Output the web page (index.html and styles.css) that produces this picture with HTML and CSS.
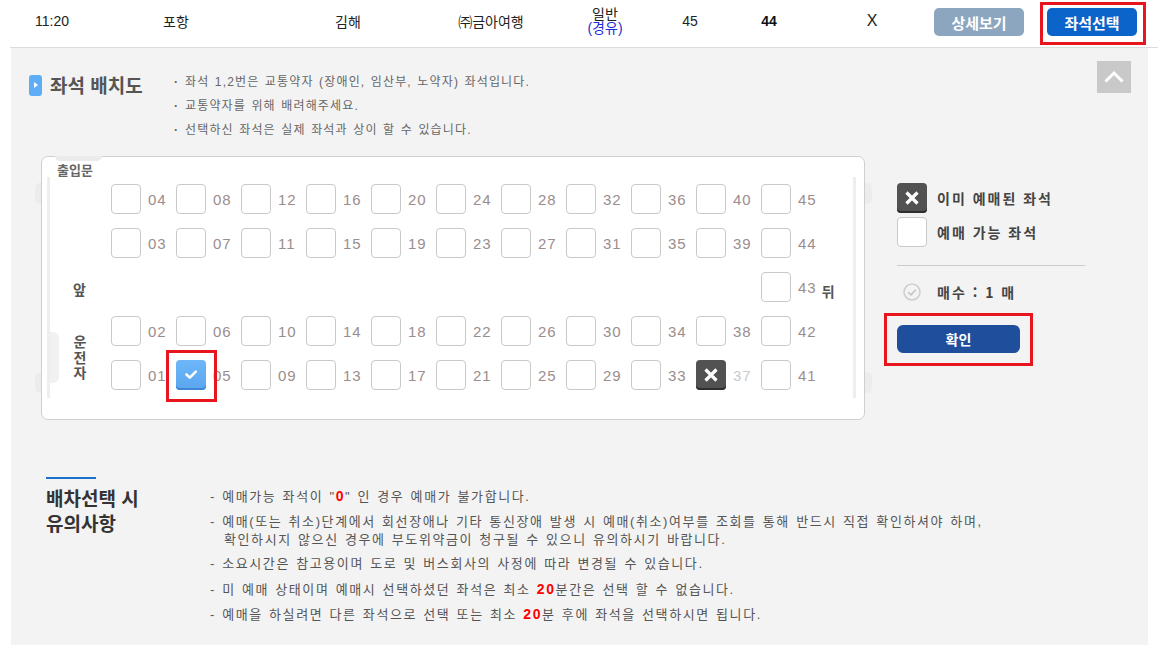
FILE: index.html
```html
<!DOCTYPE html>
<html lang="ko">
<head>
<meta charset="utf-8">
<title>좌석 배치도</title>
<link rel="stylesheet" href="styles.css">
</head>
<body>
<div class="topbar">
  <div class="cell c-time">11:20</div>
  <div class="cell c-from">포항</div>
  <div class="cell c-to">김해</div>
  <div class="cell c-co">㈜금아여행</div>
  <div class="cell c-grade"><span class="grade">일반</span><span class="via">(경유)</span></div>
  <div class="cell c-total">45</div>
  <div class="cell c-remain">44</div>
  <div class="cell c-x">X</div>
  <button class="btn btn-detail">상세보기</button>
  <div class="hl hl-top"><button class="btn btn-select">좌석선택</button></div>
</div>

<div class="panel">
  <div class="head-row">
    <h2 class="title"><span class="title-icon"></span>좌석 배치도</h2>
    <ul class="notes">
      <li>좌석 1,2번은 교통약자 (장애인, 임산부, 노약자) 좌석입니다.</li>
      <li>교통약자를 위해 배려해주세요.</li>
      <li>선택하신 좌석은 실제 좌석과 상이 할 수 있습니다.</li>
    </ul>
    <button class="up-btn" aria-label="위로">
      <svg width="34" height="32" viewBox="0 0 34 32"><path d="M8.5 20.5 L17 12 L25.5 20.5" fill="none" stroke="#fff" stroke-width="3"/></svg>
    </button>
  </div>

  <div class="seat-area">
    <div class="bus">
      <span class="deco tab"></span>
      <span class="deco line-l"></span>
      <span class="deco line-r"></span>
      <span class="deco bump-l1"></span>
      <span class="deco bump-l2"></span>
      <span class="deco bump-r1"></span>
      <span class="deco bump-r2"></span>
      <span class="deco bump-in"></span>
      <div class="door">출입문</div>
      <div class="seat-rows">
        <div class="row">
          <div class="lab"></div>
          <div class="seat"><span class="box"></span><span class="num">04</span></div>
          <div class="seat"><span class="box"></span><span class="num">08</span></div>
          <div class="seat"><span class="box"></span><span class="num">12</span></div>
          <div class="seat"><span class="box"></span><span class="num">16</span></div>
          <div class="seat"><span class="box"></span><span class="num">20</span></div>
          <div class="seat"><span class="box"></span><span class="num">24</span></div>
          <div class="seat"><span class="box"></span><span class="num">28</span></div>
          <div class="seat"><span class="box"></span><span class="num">32</span></div>
          <div class="seat"><span class="box"></span><span class="num">36</span></div>
          <div class="seat"><span class="box"></span><span class="num">40</span></div>
          <div class="seat"><span class="box"></span><span class="num">45</span></div>
        </div>
        <div class="row">
          <div class="lab"></div>
          <div class="seat"><span class="box"></span><span class="num">03</span></div>
          <div class="seat"><span class="box"></span><span class="num">07</span></div>
          <div class="seat"><span class="box"></span><span class="num">11</span></div>
          <div class="seat"><span class="box"></span><span class="num">15</span></div>
          <div class="seat"><span class="box"></span><span class="num">19</span></div>
          <div class="seat"><span class="box"></span><span class="num">23</span></div>
          <div class="seat"><span class="box"></span><span class="num">27</span></div>
          <div class="seat"><span class="box"></span><span class="num">31</span></div>
          <div class="seat"><span class="box"></span><span class="num">35</span></div>
          <div class="seat"><span class="box"></span><span class="num">39</span></div>
          <div class="seat"><span class="box"></span><span class="num">44</span></div>
        </div>
        <div class="row">
          <div class="lab front">앞</div>
          <div class="aisle"></div>
          <div class="seat"><span class="box"></span><span class="num">43</span><span class="back">뒤</span></div>
        </div>
        <div class="driver-block">
          <div class="lab driver"><span class="vtext">운전자</span></div>
          <div class="driver-rows">
            <div class="row">
              <div class="seat"><span class="box"></span><span class="num">02</span></div>
              <div class="seat"><span class="box"></span><span class="num">06</span></div>
              <div class="seat"><span class="box"></span><span class="num">10</span></div>
              <div class="seat"><span class="box"></span><span class="num">14</span></div>
              <div class="seat"><span class="box"></span><span class="num">18</span></div>
              <div class="seat"><span class="box"></span><span class="num">22</span></div>
              <div class="seat"><span class="box"></span><span class="num">26</span></div>
              <div class="seat"><span class="box"></span><span class="num">30</span></div>
              <div class="seat"><span class="box"></span><span class="num">34</span></div>
              <div class="seat"><span class="box"></span><span class="num">38</span></div>
              <div class="seat"><span class="box"></span><span class="num">42</span></div>
            </div>
            <div class="row">
              <div class="seat"><span class="box"></span><span class="num">01</span></div>
              <div class="seat"><span class="box selected"><svg width="30" height="30" viewBox="0 0 30 30"><path d="M10.5 15.5 L13.8 18.6 L19.8 12.6" fill="none" stroke="#fff" stroke-width="2.6" stroke-linecap="round" stroke-linejoin="round"/></svg></span><span class="num">05</span></div>
              <div class="seat"><span class="box"></span><span class="num">09</span></div>
              <div class="seat"><span class="box"></span><span class="num">13</span></div>
              <div class="seat"><span class="box"></span><span class="num">17</span></div>
              <div class="seat"><span class="box"></span><span class="num">21</span></div>
              <div class="seat"><span class="box"></span><span class="num">25</span></div>
              <div class="seat"><span class="box"></span><span class="num">29</span></div>
              <div class="seat"><span class="box"></span><span class="num">33</span></div>
              <div class="seat"><span class="box booked"><svg width="30" height="30" viewBox="0 0 30 30"><path d="M9.5 9.5 L20.5 20.5 M20.5 9.5 L9.5 20.5" fill="none" stroke="#fff" stroke-width="3.2"/></svg></span><span class="num dim">37</span></div>
              <div class="seat"><span class="box"></span><span class="num">41</span></div>
            </div>
          </div>
        </div>
      </div>
    </div>

    <div class="legend">
      <div class="legend-item">
        <span class="box booked"><svg width="30" height="30" viewBox="0 0 30 30"><path d="M9.5 9.5 L20.5 20.5 M20.5 9.5 L9.5 20.5" fill="none" stroke="#fff" stroke-width="3.2"/></svg></span>
        <span class="legend-text">이미 예매된 좌석</span>
      </div>
      <div class="legend-item">
        <span class="box"></span>
        <span class="legend-text">예매 가능 좌석</span>
      </div>
      <div class="legend-divider"></div>
      <div class="count">
        <svg width="18" height="18" viewBox="0 0 18 18"><circle cx="9" cy="9" r="8" fill="none" stroke="#cfcfcf" stroke-width="1.6"/><path d="M5.3 9.3 L8 11.8 L12.8 6.8" fill="none" stroke="#c4c4c4" stroke-width="1.6"/></svg>
        <span class="legend-text">매수 : 1 매</span>
      </div>
      <div class="hl hl-confirm"><button class="btn-confirm">확인</button></div>
    </div>
  </div>

  <div class="notice">
    <h3 class="notice-head">배차선택 시<br>유의사항</h3>
    <ul class="notice-list">
      <li>- 예매가능 좌석이 "<b class="red">0</b>" 인 경우 예매가 불가합니다.</li>
      <li>- 예매(또는 취소)단계에서 회선장애나 기타 통신장애 발생 시 예매(취소)여부를 조회를 통해 반드시 직접 확인하셔야 하며,<br>확인하시지 않으신 경우에 부도위약금이 청구될 수 있으니 유의하시기 바랍니다.</li>
      <li>- 소요시간은 참고용이며 도로 및 버스회사의 사정에 따라 변경될 수 있습니다.</li>
      <li>- 미 예매 상태이며 예매시 선택하셨던 좌석은 최소 <b class="red">20</b>분간은 선택 할 수 없습니다.</li>
      <li>- 예매을 하실려면 다른 좌석으로 선택 또는 최소 <b class="red">20</b>분 후에 좌석을 선택하시면 됩니다.</li>
    </ul>
  </div>
</div>
</body>
</html>
```

FILE: styles.css
```css
* { box-sizing: border-box; }

body {
  margin: 0;
  background: #fff;
  color: #333;
  font-family: "Liberation Sans", "Noto Sans CJK KR", sans-serif;
}

/* ---------- top bar ---------- */
.topbar {
  margin-left: 10px;
  height: 48px;
  border-bottom: 1px solid #dcdcdc;
  display: flex;
  align-items: flex-start;
  font-size: 14px;
  color: #222;
}
.cell {
  height: 42px;
  display: flex;
  align-items: center;
  justify-content: center;
}
.c-time { width: 84px; }
.c-from { width: 164px; }
.c-to { width: 180px; }
.c-co { width: 106px; }
.c-grade { width: 122px; flex-direction: column; line-height: 14px; padding-top: 0; }
.c-grade .via { color: #1f2fd6; }
.c-total { width: 48px; }
.c-remain { width: 110px; font-weight: bold; color: #111; }
.c-x { width: 96px; font-size: 16px; }

.btn {
  width: 90px;
  height: 28px;
  border: 0;
  border-radius: 5px;
  color: #fff;
  font: bold 15px "Noto Sans CJK KR", sans-serif;
  padding: 0;
}
.btn-detail {
  margin: 8px 0 0 14px;
  background: #8ca6bf;
}
.hl { border: 3px solid #e8141e; }
.hl-top {
  margin: 2px 0 0 16px;
  padding: 3px 6px 6px 4px;
}
.btn-select { background: #0b64c9; display: block; }

/* ---------- panel ---------- */
.panel {
  margin-left: 11px;
  width: 1137px;
  height: 597px;
  background: #f3f3f3;
  padding: 21px 17px 0 18px;
}
.head-row {
  display: flex;
  align-items: flex-start;
}
.title {
  margin: 6px 0 0 0;
  width: 124px;
  display: flex;
  align-items: center;
  gap: 8px;
  height: 20px;
  font: bold 19px/20px "Noto Sans CJK KR", sans-serif;
  color: #555;
}
.title-icon {
  width: 13px;
  height: 21px;
  border-radius: 3px;
  background: #5eaef7;
  position: relative;
  flex: none;
}
.title-icon::after {
  content: "";
  position: absolute;
  left: 5px;
  top: 7px;
  border-left: 4px solid #fff;
  border-top: 3.5px solid transparent;
  border-bottom: 3.5px solid transparent;
}
.notes {
  list-style: none;
  margin: 1px 0 0 21px;
  padding: 0;
  font-size: 12px;
  line-height: 24px;
  color: #666;
  letter-spacing: 1.15px;
  word-spacing: 1px;
}
.notes li::before {
  content: "·";
  display: inline-block;
  width: 11px;
  font-weight: bold;
}
.up-btn {
  margin: -8px 0 0 auto;
  width: 34px;
  height: 32px;
  border: 0;
  padding: 0;
  background: #c9c9c9;
  display: block;
}
.up-btn svg { display: block; }

/* ---------- seat map ---------- */
.seat-area {
  display: flex;
  margin-top: 14px;
}
.bus {
  position: relative;
  margin-left: 12px;
  width: 824px;
  height: 264px;
  border: 1px solid #cfcfcf;
  border-radius: 7px;
  background: #fff;
  padding: 4px 0 0 15px;
}
.deco { position: absolute; background: #ececec; }
.tab { left: 13px; top: -1px; width: 47px; height: 5px; border-radius: 0 0 9px 9px; background: #ebebeb; }
.line-l { left: 5px; top: 20px; width: 3px; height: 221px; background: #eeeeee; }
.line-r { left: 811px; top: 20px; width: 3px; height: 221px; background: #eeeeee; }
.bump-l1 { left: -7px; top: 26px; width: 6px; height: 21px; border-radius: 5px 0 0 5px; }
.bump-l2 { left: -7px; top: 216px; width: 6px; height: 20px; border-radius: 5px 0 0 5px; }
.bump-r1 { right: -8px; top: 26px; width: 7px; height: 21px; border-radius: 0 5px 5px 0; }
.bump-r2 { right: -8px; top: 215px; width: 7px; height: 21px; border-radius: 0 5px 5px 0; }
.bump-in { left: 8px; top: 175px; width: 9px; height: 51px; border-radius: 0 6px 6px 0; background: #f1f1f1; }

.door {
  font: bold 13px/18px "Noto Sans CJK KR", sans-serif;
  color: #666;
  margin-bottom: 5px;
  position: relative;
}
.seat-rows {
  display: flex;
  flex-direction: column;
  gap: 14px;
}
.row {
  display: flex;
  height: 30px;
}
.driver-rows {
  display: flex;
  flex-direction: column;
  gap: 14px;
}
.driver-block { display: flex; }
.lab {
  width: 54px;
  flex: none;
  padding-left: 16px;
  font: bold 14px/16px "Noto Sans CJK KR", sans-serif;
  color: #555;
}
.front { padding-top: 9px; }
.driver { padding-top: 19px; padding-left: 15px; position: relative; }
.vtext {
  display: inline-block;
  writing-mode: vertical-rl;
  text-orientation: upright;
  letter-spacing: 1.5px;
  line-height: 16px;
}
.aisle { width: 650px; flex: none; }
.seat {
  width: 65px;
  flex: none;
  display: flex;
  align-items: center;
}
.box {
  width: 30px;
  height: 30px;
  flex: none;
  border: 1px solid #c9c9c9;
  border-radius: 4px;
  background: #fff;
  display: block;
}
.box svg { display: block; }
.box.selected {
  position: relative;
  border: 0;
  background: linear-gradient(#6db6f8, #5aa6f0);
  box-shadow: inset 0 -2px 0 #3f86d4;
}
.box.selected svg { margin-top: -1px; }
.box.selected::after {
  content: "";
  position: absolute;
  left: -10px;
  top: -10px;
  right: -11px;
  bottom: -12px;
  border: 3px solid #e8141e;
}
.box.booked {
  border: 0;
  background: #525252;
  box-shadow: inset 0 -2px 0 #2e2e2e;
}
.num {
  margin-left: 7px;
  font: 15px "Liberation Sans", sans-serif;
  letter-spacing: 1px;
  color: #9b8d8d;
}
.num.dim { color: #cbcbcb; }
.back {
  margin: 8px 0 0 5px;
  font: bold 14px "Noto Sans CJK KR", sans-serif;
  color: #555;
}

/* ---------- legend ---------- */
.legend {
  margin-left: 32px;
  padding-top: 27px;
  width: 190px;
}
.legend-item {
  display: flex;
  align-items: center;
  height: 30px;
  margin-bottom: 4px;
}
.legend-text {
  margin-left: 10px;
  font: bold 14px "Noto Sans CJK KR", sans-serif;
  letter-spacing: 2px;
  color: #444;
}
.legend-divider {
  margin-top: 18px;
  width: 188px;
  height: 1px;
  background: #cccccc;
}
.count {
  margin-top: 17px;
  height: 18px;
  display: flex;
  align-items: center;
  padding-left: 6px;
}
.count svg { display: block; }
.count .legend-text { margin-left: 16px; }
.hl-confirm {
  margin: 12px 0 0 -13px;
  width: 149px;
  padding: 9px 10px 10px 10px;
}
.btn-confirm {
  display: block;
  width: 123px;
  height: 28px;
  border: 0;
  border-radius: 6px;
  background: #1f4f9c;
  color: #fff;
  font: bold 14px "Noto Sans CJK KR", sans-serif;
  padding: 0;
}

/* ---------- notice ---------- */
.notice {
  display: flex;
  margin: 57px 0 0 17px;
}
.notice-head {
  width: 164px;
  flex: none;
  margin: 0;
  font: bold 19px/25px "Noto Sans CJK KR", sans-serif;
  color: #333;
}
.notice-head::before {
  content: "";
  display: block;
  width: 50px;
  height: 2px;
  background: #1c70cd;
  margin-bottom: 6px;
}
.notice-list {
  list-style: none;
  margin: 10px 0 0 0;
  padding: 0;
  font-size: 13px;
  line-height: 18px;
  color: #555;
  letter-spacing: 1.6px;
  word-spacing: 1px;
}
.notice-list li {
  padding-left: 14px;
  text-indent: -14px;
  margin-bottom: 6.5px;
}
.red { color: #ff0000; font-weight: bold; font-family: "Liberation Sans", sans-serif; font-size: 14px; }
```
